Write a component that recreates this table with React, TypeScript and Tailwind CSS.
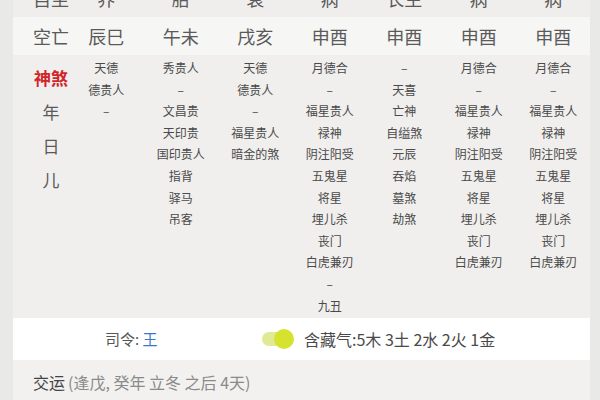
import React from 'react';

const font = { fontFamily: '"Noto Sans CJK SC", "Noto Sans", sans-serif' };

const topRow = ['自坐', '养', '胎', '衰', '病', '长生', '病', '病'];
const kongWang = ['空亡', '辰巳', '午未', '戌亥', '申酉', '申酉', '申酉', '申酉'];

const shenSha: string[][] = [
  ['天德', '德贵人', '–'],
  ['秀贵人', '–', '文昌贵', '天印贵', '国印贵人', '指背', '驿马', '吊客'],
  ['天德', '德贵人', '–', '福星贵人', '暗金的煞'],
  ['月德合', '–', '福星贵人', '禄神', '阴注阳受', '五鬼星', '将星', '埋儿杀', '丧门', '白虎兼刃', '–', '九丑'],
  ['–', '天喜', '亡神', '自缢煞', '元辰', '吞焰', '墓煞', '劫煞'],
  ['月德合', '–', '福星贵人', '禄神', '阴注阳受', '五鬼星', '将星', '埋儿杀', '丧门', '白虎兼刃'],
  ['月德合', '–', '福星贵人', '禄神', '阴注阳受', '五鬼星', '将星', '埋儿杀', '丧门', '白虎兼刃'],
];

const cols = 'grid grid-cols-[56px_repeat(7,74.5px)]';

function BigRow({ cells, className }: { cells: string[]; className: string }) {
  return (
    <div className={`${cols} h-[38px] items-center text-[18px] text-[#5a5a5a] ${className}`}>
      {cells.map((c, i) => (
        <div key={i} className={i === 0 ? 'pl-[20px] text-center' : 'text-center'}>
          {c}
        </div>
      ))}
    </div>
  );
}

function Toggle() {
  return (
    <div className="relative w-[32px] h-[20px] flex items-center">
      <div className="w-[28px] h-[14px] rounded-full bg-[#e0ea94]" />
      <div className="absolute right-0 top-0 w-[20px] h-[20px] rounded-full bg-[#d6e32e]" />
    </div>
  );
}

export default function App() {
  return (
    <div className="w-[600px] h-[400px] overflow-hidden bg-[#e9e9e8] flex" style={font}>
      <div className="ml-[13px] w-[577px] flex flex-col">
        <BigRow cells={topRow} className="bg-[#efeeec] mt-[-21px]" />
        <BigRow cells={kongWang} className="bg-[#f6f6f5]" />

        <div className={`${cols} bg-[#f0efed] h-[263px] pt-[2px]`}>
          <div className="pl-[20px] pt-[4px] flex flex-col items-center text-[17px] leading-[34px] text-[#5a5a5a]">
            <div className="text-[#d0262a] font-bold">神煞</div>
            <div>年</div>
            <div>日</div>
            <div>儿</div>
          </div>
          {shenSha.map((col, i) => (
            <div key={i} className="flex flex-col items-center text-[12px] leading-[21.6px] text-[#4a4a4a]">
              {col.map((t, j) => (
                <div key={j}>{t}</div>
              ))}
            </div>
          ))}
        </div>

        <div className="bg-white h-[42px] flex items-center text-[15px] text-[#555555]">
          <div className="ml-[92px] w-[150px]">
            司令: <span className="text-[#3a78c9]">王</span>
          </div>
          <div className="ml-[7px]">
            <Toggle />
          </div>
          <div className="ml-[10px] text-[16px] text-[#4a4a4a]">含藏气:5木 3土 2水 2火 1金</div>
        </div>

        <div className="bg-[#f2f1ef] h-[40px] flex items-center pl-[20px] pt-[3px] text-[16px]">
          <span className="text-[#444444]">交运</span>
          <span className="text-[#8a8a8a] ml-[3px]">(逢戊, 癸年 立冬 之后 4天)</span>
        </div>
      </div>
    </div>
  );
}
